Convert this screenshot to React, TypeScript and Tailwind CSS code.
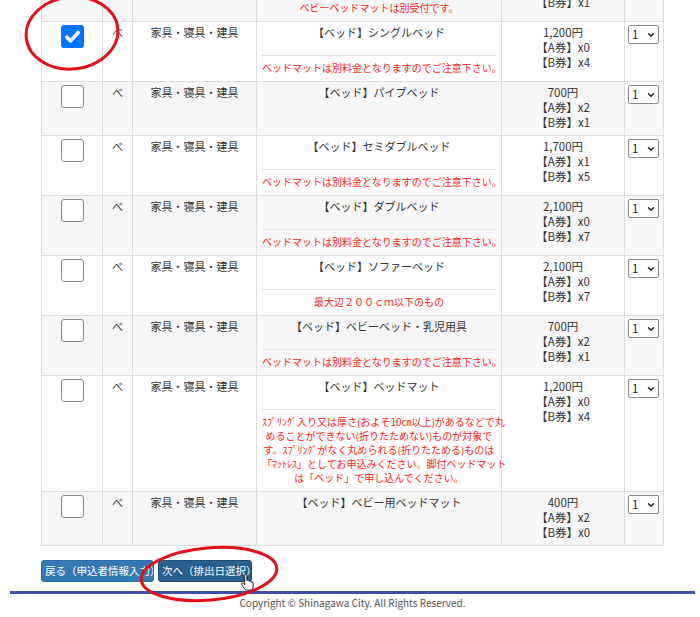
import { ChevronDown } from "lucide-react";

type Row = {
  title: string;
  note?: string[];
  price: string;
  a: number;
  b: number;
  checked?: boolean;
};

const NOTE_MAT = ["ベッドマットは別料金となりますのでご注意下さい。"];

const rows: Row[] = [
  { title: "【ベッド】ベビーベッド", note: ["ベビーベッドマットは別受付です。"], price: "700円", a: 2, b: 1 },
  { title: "【ベッド】シングルベッド", note: NOTE_MAT, price: "1,200円", a: 0, b: 4, checked: true },
  { title: "【ベッド】パイプベッド", price: "700円", a: 2, b: 1 },
  { title: "【ベッド】セミダブルベッド", note: NOTE_MAT, price: "1,700円", a: 1, b: 5 },
  { title: "【ベッド】ダブルベッド", note: NOTE_MAT, price: "2,100円", a: 0, b: 7 },
  { title: "【ベッド】ソファーベッド", note: ["最大辺２００ｃｍ以下のもの"], price: "2,100円", a: 0, b: 7 },
  { title: "【ベッド】ベビーベッド・乳児用具", note: NOTE_MAT, price: "700円", a: 2, b: 1 },
  {
    title: "【ベッド】ベッドマット",
    note: [
      "ｽﾌﾟﾘﾝｸﾞ入り又は厚さ(およそ10㎝以上)があるなどで丸",
      "めることができない(折りたためない)ものが対象で",
      "す。ｽﾌﾟﾘﾝｸﾞがなく丸められる(折りたためる)ものは",
      "「ﾏｯﾄﾚｽ」としてお申込みください。脚付ベッドマット",
      "は「ベッド」で申し込んでください。",
    ],
    price: "1,200円",
    a: 0,
    b: 4,
  },
  { title: "【ベッド】ベビー用ベッドマット", price: "400円", a: 2, b: 0 },
];

function Checkbox({ checked }: { checked?: boolean }) {
  if (checked) {
    return (
      <div className="mx-auto flex h-[23px] w-[23px] items-center justify-center rounded-[3px] bg-[#0075ff]">
        <svg viewBox="0 0 16 16" className="h-[19px] w-[19px]">
          <path d="M3.2 8.6l3.2 3.1L12.8 4.6" fill="none" stroke="#fff" strokeWidth="3" strokeLinecap="round" strokeLinejoin="round" />
        </svg>
      </div>
    );
  }
  return <div className="mx-auto h-[23px] w-[23px] rounded-[3px] border-[1.5px] border-[#8a8a8a] bg-white" />;
}

function FakeSelect() {
  return (
    <div className="flex h-[19px] w-[31px] items-center justify-between rounded-[2px] border border-[#8a8a8a] bg-white pl-[3px] pr-[2px] text-[11.5px] leading-none text-[#222]">
      <span>1</span>
      <ChevronDown className="h-[10px] w-[10px]" strokeWidth={3.5} />
    </div>
  );
}

export default function App() {
  const cell = "border border-[#dddddd] align-top";
  return (
    <div className="relative h-[617px] overflow-hidden bg-white font-['Noto_Sans_CJK_JP',sans-serif] text-[#333]">
      <div className="-mt-[39px] pl-[41px]">
        <table className="w-[622px] table-fixed border-collapse text-[11px] leading-[15px]">
          <colgroup>
            <col className="w-[61px]" />
            <col className="w-[30px]" />
            <col className="w-[124px]" />
            <col className="w-[245px]" />
            <col className="w-[123px]" />
            <col className="w-[39px]" />
          </colgroup>
          <tbody>
            {rows.map((r, i) => (
              <tr key={i} className={i % 2 === 0 ? "bg-[#f7f7f7]" : "bg-white"}>
                <td className={`${cell} pt-[3px]`}>
                  <Checkbox checked={r.checked} />
                </td>
                <td className={`${cell} pt-[3px] text-center`}>べ</td>
                <td className={`${cell} pt-[3px] text-center`}>家具・寝具・建具</td>
                <td className={`${cell} px-[5px] pt-[3px] pb-[6px] text-center`}>
                  <div>{r.title}</div>
                  {r.note && (
                    <div className="mt-[15px] border-t border-[#e2e2e2] pt-[5px] text-[10px] leading-[14px] text-[#ff1a1a]">
                      {r.note.map((l, j) => (
                        <div key={j} className="whitespace-nowrap">
                          {l}
                        </div>
                      ))}
                    </div>
                  )}
                </td>
                <td className={`${cell} pt-[3px] pb-[5px] text-center text-[11.5px]`}>
                  <div>{r.price}</div>
                  <div>【A券】x{r.a}</div>
                  <div>【B券】x{r.b}</div>
                </td>
                <td className={`${cell} pl-[3px] pt-[3px]`}>
                  <FakeSelect />
                </td>
              </tr>
            ))}
          </tbody>
        </table>
      </div>

      <div className="mt-[14px] flex gap-[4px] pl-[41px] text-[10.5px] text-white">
        <button
          type="button"
          className="h-[22px] w-[113px] overflow-hidden whitespace-nowrap rounded-[3px] border border-[#2e6da4] bg-[#337ab7] px-[3px] text-left"
        >
          戻る（申込者情報入力）
        </button>
        <button
          type="button"
          className="h-[22px] w-[94px] overflow-hidden whitespace-nowrap rounded-[3px] border border-[#204d74] bg-[#286090] px-[3px] text-left"
        >
          次へ（排出日選択）
        </button>
      </div>

      <div className="ml-[10px] mr-[5px] mt-[9px] h-[3px] bg-[#3f4fad]" />
      <p className="ml-[10px] mr-[5px] mt-[2px] text-center text-[10px] leading-[14px] text-[#555]">
        Copyright © Shinagawa City. All Rights Reserved.
      </p>

      {/* red annotation marks + mouse cursor */}
      <svg className="pointer-events-none absolute left-0 top-0" width="700" height="617" viewBox="0 0 700 617">
        <ellipse cx="72" cy="33" rx="46" ry="36" transform="rotate(-6 72 33)" fill="none" stroke="#e3101b" strokeWidth="3" />
        <ellipse cx="209" cy="574" rx="68" ry="26" transform="rotate(-5 209 574)" fill="none" stroke="#e3101b" strokeWidth="3" />
        <g transform="translate(240 574) scale(0.85)">
          <path
            d="M5.5 1.5a1.3 1.3 0 0 1 2.6 0v6.2h.2a1.3 1.3 0 0 1 2.5.4v.6a1.3 1.3 0 0 1 2.4.5v.6a1.3 1.3 0 0 1 2.3.6v4.6c0 2.2-1.5 4-3.7 4h-3.4c-1.3 0-2.3-.6-3-1.6L1.9 12.4a1.3 1.3 0 0 1 2-1.6l1.6 1.7V1.5z"
            fill="#fff"
            stroke="#000"
            strokeWidth="1"
          />
        </g>
      </svg>
    </div>
  );
}
